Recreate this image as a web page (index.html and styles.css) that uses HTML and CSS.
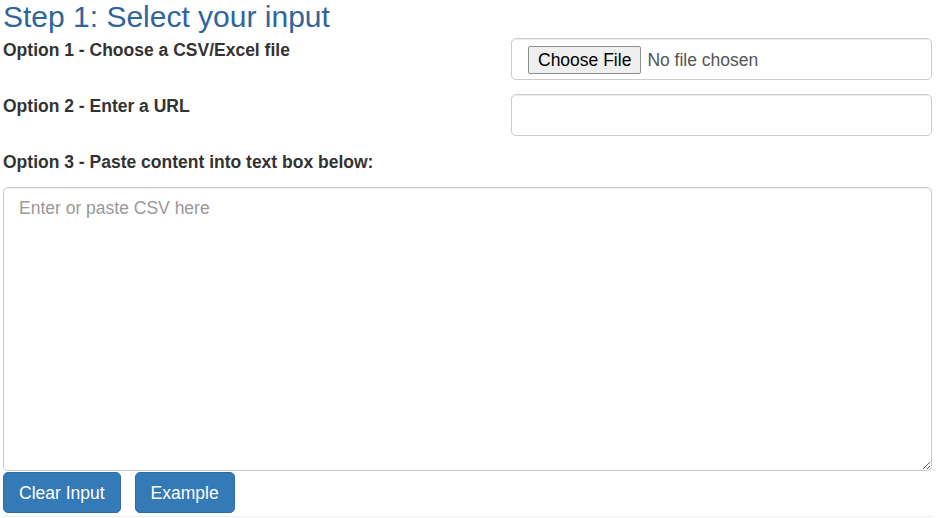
FILE: index.html
```html
<!DOCTYPE html>
<html lang="en">
<head>
    <meta charset="UTF-8">
    <meta name="viewport" content="width=device-width, initial-scale=1.0">
    <title>Step 1: Select your input</title>
    <link rel="stylesheet" href="styles.css">
</head>
<body>
    <div class="container">
        <h3 class="step-title">Step 1: Select your input</h3>

        <div class="option-row">
            <label for="fileInput">Option 1 - Choose a CSV/Excel file</label>
            <input type="file" id="fileInput" class="form-control file-control">
        </div>

        <div class="option-row">
            <label for="urlInput">Option 2 - Enter a URL</label>
            <input type="text" id="urlInput" class="form-control">
        </div>

        <label class="option-label" for="csvInput">Option 3 - Paste content into text box below:</label>
        <textarea id="csvInput" class="form-control csv-box" placeholder="Enter or paste CSV here"></textarea>

        <div class="actions">
            <button class="btn btn-primary" onclick="clearInput()">Clear Input</button>
            <button class="btn btn-primary" onclick="loadExample()">Example</button>
        </div>
        <hr class="divider">
    </div>

    <script>
        function clearInput() {
            document.getElementById("csvInput").value = "";
            document.getElementById("urlInput").value = "";
            document.getElementById("fileInput").value = "";
        }

        function loadExample() {
            document.getElementById("csvInput").value = "name,age\nAlice,30\nBob,25";
        }
    </script>
</body>
</html>
```

FILE: styles.css
```css
body {
    margin: 0;
    font-family: "Liberation Sans", Arial, sans-serif;
    font-size: 17.5px;
    line-height: 25px;
    color: #333;
    background: #fff;
}
.container {
    padding: 0 7px 0 3px;
}
.step-title {
    margin: 0 0 5px 0;
    font-size: 30px;
    font-weight: normal;
    line-height: 33px;
    color: #30659b;
}
.option-row {
    display: grid;
    grid-template-columns: 508px 1fr;
    align-items: start;
    margin-bottom: 14px;
}
.option-row label, .option-label {
    display: block;
    font-weight: bold;
}
.option-label {
    margin-bottom: 12px;
}
.form-control {
    display: block;
    width: 100%;
    height: 42px;
    box-sizing: border-box;
    padding: 7.5px 15px;
    font-family: inherit;
    font-size: 17.5px;
    line-height: 25px;
    color: #555;
    background: #fff;
    border: 1px solid #ccc;
    border-radius: 5px;
    box-shadow: inset 0 1px 1px rgba(0, 0, 0, 0.075);
}
.file-control {
    padding: 7px 15px 7px 16px;
}
.file-control::file-selector-button {
    height: 28px;
    margin-right: 6px;
    padding: 1px 9px;
    font-family: inherit;
    font-size: 17.5px;
    color: #000;
    background: #efefef;
    border: 1px solid #8f8f8f;
    border-radius: 2px;
}
.form-control::placeholder {
    color: #999;
}
.csv-box {
    height: 284px;
    resize: vertical;
}
.actions {
    display: flex;
    gap: 14px;
    margin-top: 1px;
}
.btn {
    height: 41px;
    padding: 7.5px 15px;
    font-family: inherit;
    font-size: 17.5px;
    line-height: 25px;
    border-radius: 5px;
    cursor: pointer;
}
.btn-primary {
    color: #fff;
    background-color: #337ab7;
    border: 1px solid #2e6da4;
}
.btn-primary:hover {
    background-color: #286090;
}
.divider {
    margin: 3px 0 0 0;
    border: 0;
    border-top: 1px solid #eee;
}
```
